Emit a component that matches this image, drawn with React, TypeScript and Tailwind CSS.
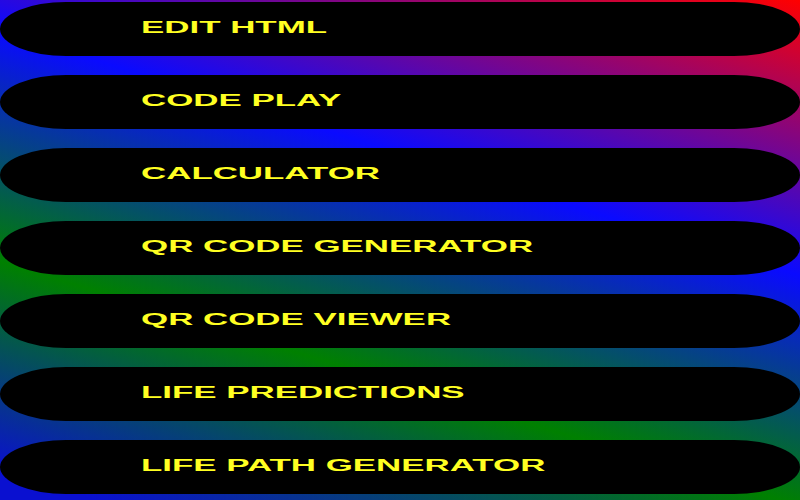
import React from "react";

const items = [
  "EDIT HTML",
  "CODE PLAY",
  "CALCULATOR",
  "QR CODE GENERATOR",
  "QR CODE VIEWER",
  "LIFE PREDICTIONS",
  "LIFE PATH GENERATOR",
];

export default function App() {
  return (
    <div className="w-full h-[500px] overflow-hidden bg-[linear-gradient(197deg,#ff0000_0%,#0a0aff_37%,#008000_68%,#0a10d0_96%)]">
      <div className="flex flex-col gap-[19px] pt-[2px]">
        {items.map((t) => (
          <div
            key={t}
            className="h-[54px] w-full bg-black rounded-[66px/50%] flex items-center pl-[141px]"
          >
            <span
              className="inline-block origin-left scale-x-[2.18] text-[16px] font-bold text-[#ffff22] leading-none whitespace-nowrap -mt-[3px]"
              style={{ fontFamily: '"Liberation Sans", Arial, sans-serif' }}
            >
              {t}
            </span>
          </div>
        ))}
      </div>
    </div>
  );
}
